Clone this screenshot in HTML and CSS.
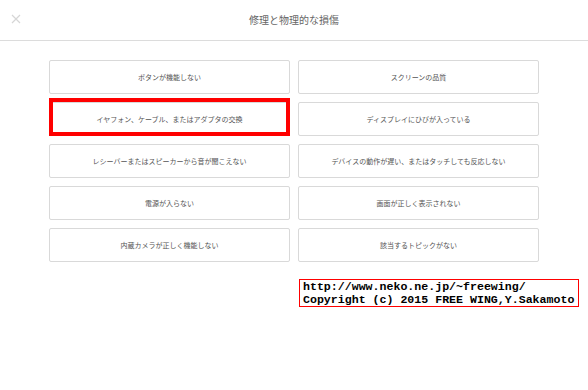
FILE: index.html
```html
<!DOCTYPE html>
<html lang="ja">

<head>
  <meta charset="UTF-8" />
  <meta name="viewport" content="width=device-width, initial-scale=1.0" />
  <title>修理と物理的な損傷</title>
  <link rel="stylesheet" href="styles.css">
</head>

<body>
  <!-- Header -->
  <div class="header">
    <span class="close">
      <svg width="10" height="10" viewBox="0 0 10 10">
        <path d="M1 1 L9 9 M9 1 L1 9" stroke="#d6d6d6" stroke-width="1.2" fill="none" />
      </svg>
    </span>
    <h1>修理と物理的な損傷</h1>
  </div>

  <!-- Topics -->
  <div class="topics">
    <button>ボタンが機能しない</button>
    <button>スクリーンの品質</button>
    <button>イヤフォン、ケーブル、またはアダプタの交換</button>
    <button>ディスプレイにひびが入っている</button>
    <button>レシーバーまたはスピーカーから音が聞こえない</button>
    <button>デバイスの動作が遅い、またはタッチしても反応しない</button>
    <button>電源が入らない</button>
    <button>画面が正しく表示されない</button>
    <button>内蔵カメラが正しく機能しない</button>
    <button>該当するトピックがない</button>
  </div>

  <!-- Annotations -->
  <div class="mark"></div>
  <div class="credit">http://www.neko.ne.jp/~freewing/<br>Copyright (c) 2015 FREE WING,Y.Sakamoto</div>
</body>

</html>
```

FILE: styles.css
```css
* {
  box-sizing: border-box;
  margin: 0;
  padding: 0;
}

body {
  background-color: #fff;
  font-family: "Noto Sans CJK JP", "Noto Sans", sans-serif;
  position: relative;
  width: 588px;
  height: 390px;
}

/* Header */
.header {
  height: 41px;
  border-bottom: 1px solid #dcdcdc;
  display: flex;
  align-items: center;
  justify-content: center;
  position: relative;
}

.header h1 {
  font-size: 10px;
  font-weight: normal;
  color: #666;
  margin-top: -2px;
}

.header .close {
  position: absolute;
  left: 11px;
  top: 14px;
  width: 10px;
  height: 10px;
}

.header .close svg {
  display: block;
}

/* Topics */
.topics {
  display: grid;
  grid-template-columns: 241px 241px;
  grid-auto-rows: 34px;
  gap: 8px;
  width: 490px;
  margin: 19px auto 0;
}

.topics button {
  background-color: #fff;
  border: 1px solid #d9d9d9;
  border-radius: 2px;
  font-family: inherit;
  font-size: 7px;
  color: #555;
  cursor: pointer;
}

/* Annotations */
.mark {
  position: absolute;
  left: 49px;
  top: 98px;
  width: 241px;
  height: 38px;
  border: 4px solid #f00;
}

.credit {
  position: absolute;
  left: 299px;
  top: 279px;
  width: 280px;
  height: 28px;
  border: 1px solid #f00;
  padding: 0 3px;
  font-family: "Liberation Mono", monospace;
  font-weight: bold;
  font-size: 11.6px;
  line-height: 13px;
  color: #000;
  background-color: #fff;
  white-space: nowrap;
}
```
